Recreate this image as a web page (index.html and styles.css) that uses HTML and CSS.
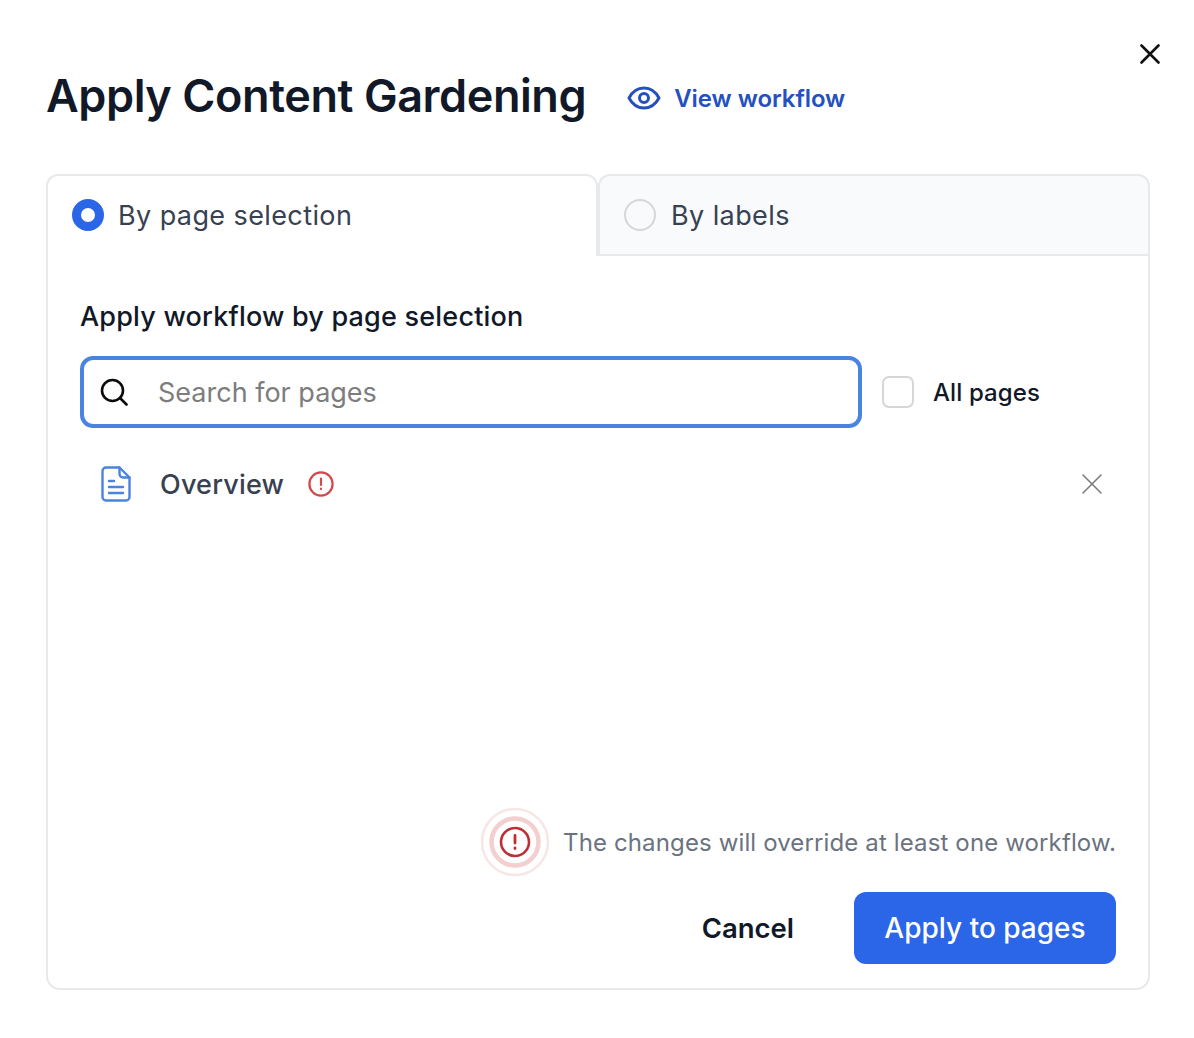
FILE: index.html
```html
<!DOCTYPE html>
<html lang="en">
<head>
<meta charset="utf-8">
<title>Apply Content Gardening</title>
<link rel="stylesheet" href="styles.css">
</head>
<body>
<div class="dialog">
  <button class="close" aria-label="Close">
    <svg viewBox="0 0 20 20" width="20" height="20"><path d="M1.500 1.500 18.500 18.500M18.500 1.500 1.500 18.500" fill="none" stroke="#111" stroke-width="2.600" stroke-linecap="round"/></svg>
  </button>
  <header class="head">
    <h1 class="title">Apply Content Gardening</h1>
    <a class="view-link">
      <svg viewBox="0 0 34 26" width="34" height="26" fill="none" stroke="#2450c0" stroke-width="3"><path d="M2 13C5.500 6.500 10.500 3 17 3s11.500 3.500 15 10c-3.500 6.500-8.500 10-15 10S5.500 19.500 2 13Z" stroke-linejoin="round"/><circle cx="17" cy="13" r="4.500"/></svg>
      <span>View workflow</span>
    </a>
  </header>
  <div class="tabs">
    <div class="tab tab-on"><span class="radio radio-on"></span><span>By page selection</span></div>
    <div class="tab tab-off"><span class="radio"></span><span>By labels</span></div>
  </div>
  <section class="panel">
    <h2 class="panel-title">Apply workflow by page selection</h2>
    <div class="search-row">
      <div class="search">
        <svg viewBox="0 0 28 28" width="28" height="28" fill="none" stroke="#0b0b0b" stroke-width="2.600"><circle cx="12.500" cy="12.500" r="10.500"/><path d="m20 20 6.500 6.500" stroke-linecap="round"/></svg>
        <span class="placeholder">Search for pages</span>
      </div>
      <label class="all"><span class="check"></span><span>All pages</span></label>
    </div>
    <div class="item">
      <svg class="doc" viewBox="0 0 30 36" width="30" height="36" fill="none" stroke="#4a83e0" stroke-width="2.400" stroke-linejoin="round" stroke-linecap="round"><path d="M5 1.500h13.500L28.500 11.500V31a3.500 3.500 0 0 1-3.500 3.500H5A3.500 3.500 0 0 1 1.500 31V5A3.500 3.500 0 0 1 5 1.500Z"/><path d="M18.500 1.500V8a3.500 3.500 0 0 0 3.500 3.500h6.500"/><path d="M8 15h5M8 21h14M8 27h14"/></svg>
      <span class="item-name">Overview</span>
      <svg class="alert" viewBox="0 0 26 26" width="26" height="26" fill="none" stroke="#d2474a" stroke-width="2.200"><circle cx="13" cy="13" r="11.600"/><path d="M13 7.500v6.500M13 17.500v.6" stroke-linecap="round"/></svg>
      <svg class="remove" viewBox="0 0 20 20" width="20" height="20"><path d="M1 1 19 19M19 1 1 19" fill="none" stroke="#7b7b7b" stroke-width="1.600" stroke-linecap="round"/></svg>
    </div>
    <div class="warning">
      <svg viewBox="0 0 70 70" width="70" height="70" fill="none"><circle cx="35" cy="35" r="33" stroke="#f8e6e6" stroke-width="2.500"/><circle cx="35" cy="35" r="23.500" stroke="#f3cfcf" stroke-width="4.500"/><circle cx="35" cy="35" r="14" stroke="#be2f34" stroke-width="2.600"/><path d="M35 28.500v7.500M35 41v.6" stroke="#be2f34" stroke-width="2.800" stroke-linecap="round"/></svg>
      <span>The changes will override at least one workflow.</span>
    </div>
    <div class="actions">
      <button class="btn-text">Cancel</button>
      <button class="btn-primary">Apply to pages</button>
    </div>
  </section>
</div>
</body>
</html>
```

FILE: styles.css
```css
* { box-sizing: border-box; }
html, body { margin: 0; background: #fff; }
body { font-family: Inter, "Liberation Sans", sans-serif; color: #111827; }
button { font-family: inherit; border: 0; background: none; padding: 0; }

.dialog { position: relative; width: 1194px; height: 1038px; padding: 63px 44px 48px 46px; display: flex; flex-direction: column; }
.close { position: absolute; top: 44px; left: 1140px; width: 20px; height: 20px; display: block; }
.close svg { display: block; }

.head { display: flex; align-items: center; height: 66px; margin-bottom: 45px; }
.title { margin: 0; font-size: 45px; font-weight: 600; line-height: 62px; letter-spacing: -0.42px; }
.view-link { display: flex; align-items: center; gap: 13px; margin-left: 41px; margin-top: 4px; color: #2450c0; font-size: 24px; font-weight: 600; letter-spacing: -0.06px; }

.tabs { display: grid; grid-template-columns: 552px 552px; height: 82px; font-size: 27px; letter-spacing: 0.4px; color: #374151; }
.tab { display: flex; align-items: center; border: 2px solid #e8e9eb; border-radius: 12px 12px 0 0; }
.tab-on { border-bottom: 0; padding-left: 24px; padding-bottom: 2px; gap: 14px; background: #fff; }
.tab-off { padding-left: 24px; gap: 15px; background: #f8fafc; }
.radio { width: 32px; height: 32px; border-radius: 50%; border: 2px solid #d6d6d6; flex: none; }
.radio-on { border: 9.500px solid #2b65e8; background: #fff; }

.panel { flex: 1; display: flex; flex-direction: column; border: 2px solid #e8e9eb; border-top: 0; border-radius: 0 0 14px 14px; padding: 0 32px 24px 32px; }
.panel-title { margin: 43px 0 0; font-size: 27px; font-weight: 500; line-height: 36px; letter-spacing: 0.2px; }

.search-row { display: flex; align-items: center; margin-top: 21px; }
.search { width: 782px; height: 72px; display: flex; align-items: center; gap: 30px; padding-left: 16px; border: 4px solid #4a83e0; border-radius: 13px; }
.placeholder { color: #7d7d7d; font-size: 27px; }
.all { display: flex; align-items: center; gap: 19px; margin-left: 20px; font-size: 24px; font-weight: 500; letter-spacing: 0.1px; }
.check { width: 32px; height: 32px; border: 2px solid #d6d6d6; border-radius: 7px; }

.item { display: flex; align-items: center; height: 36px; margin-top: 38px; padding-left: 21px; }
.doc { flex: none; }
.item-name { margin-left: 29px; font-size: 27px; font-weight: 500; letter-spacing: 0.2px; color: #374151; }
.alert { margin-left: 24px; flex: none; }
.remove { margin-left: auto; margin-right: 14px; flex: none; }

.warning { display: flex; align-items: center; justify-content: flex-end; gap: 13px; margin-top: auto; color: #6b7280; font-size: 24px; letter-spacing: 0.13px; }

.actions { display: flex; align-items: center; justify-content: flex-end; gap: 60px; margin-top: 15px; }
.btn-text { font-size: 27.500px; font-weight: 600; color: #111827; }
.btn-primary { width: 262px; height: 72px; border-radius: 12px; background: #2b65e8; color: #fff; font-size: 28px; font-weight: 500; }
```
